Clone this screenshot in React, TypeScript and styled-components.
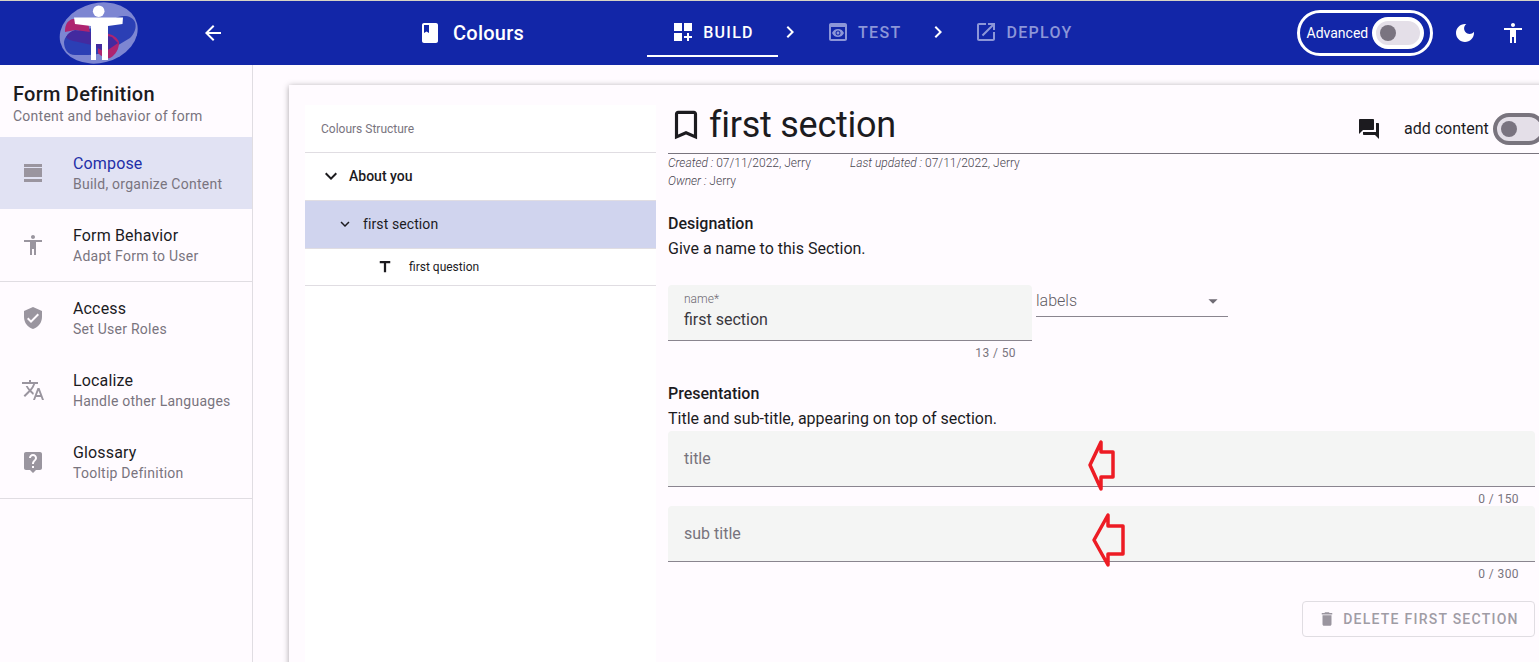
import React from "react";
import styled, { createGlobalStyle } from "styled-components";

const ink = "#1c1b1f";
const muted = "#79747e";
const blue = "#1226a8";

const paths = {
  back: "M20 11H7.83l5.59-5.59L12 4l-8 8 8 8 1.41-1.41L7.83 13H20v-2z",
  book: "M18 2H6c-1.1 0-2 .9-2 2v16c0 1.1.9 2 2 2h12c1.1 0 2-.9 2-2V4c0-1.1-.9-2-2-2zM6 4h5v8l-2.5-1.5L6 12V4z",
  build: "M3 3h8v8H3zm10 0h8v8h-8zM3 13h8v8H3zm15 0h-2v3h-3v2h3v3h2v-3h3v-2h-3z",
  test: "M19 3H5c-1.11 0-2 .9-2 2v14c0 1.1.89 2 2 2h14c1.1 0 2-.9 2-2V5c0-1.1-.89-2-2-2zm0 16H5V7h14v12zm-5.5-6c0 .83-.67 1.5-1.5 1.5s-1.5-.67-1.5-1.5.67-1.5 1.5-1.5 1.5.67 1.5 1.5zM12 9c-2.73 0-5.06 1.66-6 4 .94 2.34 3.27 4 6 4s5.06-1.66 6-4c-.94-2.34-3.27-4-6-4zm0 6.5c-1.38 0-2.5-1.12-2.5-2.5s1.12-2.5 2.5-2.5 2.5 1.12 2.5 2.5-1.12 2.5-2.5 2.5z",
  deploy: "M19 19H5V5h7V3H5c-1.11 0-2 .9-2 2v14c0 1.1.89 2 2 2h14c1.1 0 2-.9 2-2v-7h-2v7zM14 3v2h3.59l-9.83 9.83 1.41 1.41L19 6.41V10h2V3h-7z",
  chevron: "M10 6L8.59 7.41 13.17 12l-4.58 4.59L10 18l6-6z",
  moon: "M12 3c-4.97 0-9 4.03-9 9s4.03 9 9 9 9-4.03 9-9c0-.46-.04-.92-.1-1.36-.98 1.37-2.58 2.26-4.4 2.26-2.98 0-5.4-2.42-5.4-5.4 0-1.81.89-3.42 2.26-4.4-.44-.06-.9-.1-1.36-.1z",
  person: "M12 2c1.1 0 2 .9 2 2s-.9 2-2 2-2-.9-2-2 .9-2 2-2zm9 7h-6v13h-2v-6h-2v6H9V9H3V7h18v2z",
  compose: "M3 3h18v3H3zM3 7h18v9H3zM3 18h18v3H3z",
  shield: "M12 1L3 5v6c0 5.55 3.84 10.74 9 12 5.16-1.26 9-6.45 9-12V5l-9-4zm-2 16l-4-4 1.41-1.41L10 14.17l6.59-6.59L18 9l-8 8z",
  translate: "M12.87 15.07l-2.54-2.51.03-.03c1.74-1.94 2.98-4.17 3.71-6.53H17V4h-7V2H8v2H1v1.99h11.17C11.5 7.92 10.44 9.75 9 11.35 8.07 10.32 7.3 9.19 6.69 8h-2c.73 1.63 1.73 3.17 2.98 4.56l-5.09 5.02L4 19l5-5 3.11 3.11.76-2.04zM18.5 10h-2L12 22h2l1.12-3h4.75L21 22h2l-4.5-12zm-2.62 7l1.62-4.33L19.12 17h-3.24z",
  help: "M19 2H5c-1.11 0-2 .9-2 2v14c0 1.1.89 2 2 2h4l3 3 3-3h4c1.1 0 2-.9 2-2V4c0-1.1-.9-2-2-2zm-6 16h-2v-2h2v2zm2.07-7.75l-.9.92C13.45 11.9 13 12.5 13 14h-2v-.5c0-1.1.45-2.1 1.17-2.83l1.24-1.26c.37-.36.59-.86.59-1.41 0-1.1-.9-2-2-2s-2 .9-2 2H8c0-2.21 1.79-4 4-4s4 1.79 4 4c0 .88-.36 1.68-.93 2.25z",
  expand: "M16.59 8.59L12 13.17 7.41 8.59 6 10l6 6 6-6z",
  title: "M5 4v3h5.5v12h3V7H19V4z",
  bookmark: "M17 3H7c-1.1 0-1.99.9-1.99 2L5 21l7-3 7 3V5c0-1.1-.9-2-2-2zm0 15l-5-2.18L7 18V5h10v13z",
  forum: "M21 6h-2v9H6v2c0 .55.45 1 1 1h11l4 4V7c0-.55-.45-1-1-1zm-4 6V3c0-.55-.45-1-1-1H3c-.55 0-1 .45-1 1v14l4-4h10c.55 0 1-.45 1-1z",
  drop: "M7 10l5 5 5-5z",
  trash: "M6 19c0 1.1.9 2 2 2h8c1.1 0 2-.9 2-2V7H6v12zM19 4h-3.5l-1-1h-5l-1 1H5v2h14V4z",
};

const GlobalStyle = createGlobalStyle`
  html, body {
    margin: 0;
    height: 662px;
    overflow: hidden;
    background: #fffbff;
    font-family: Roboto, "Liberation Sans", sans-serif;
    color: ${ink};
  }
  * { box-sizing: border-box; }
`;

const Svg = styled.svg<{ $size: number; $color: string; $gap?: number }>`
  display: block;
  flex: none;
  width: ${(p) => p.$size}px;
  height: ${(p) => p.$size}px;
  fill: ${(p) => p.$color};
  margin-left: ${(p) => p.$gap ?? 0}px;
`;

function Icon({ d, size = 24, color = "currentColor", gap }: { d: string; size?: number; color?: string; gap?: number }) {
  return (
    <Svg viewBox="0 0 24 24" $size={size} $color={color} $gap={gap}>
      <path d={d} />
    </Svg>
  );
}

const Page = styled.div`
  width: 1539px;
  height: 662px;
  overflow: hidden;
  display: flex;
  flex-direction: column;
`;

const Header = styled.header`
  flex: none;
  height: 65px;
  border-top: 1px solid #d6d3c4;
  background: ${blue};
  color: #fff;
  display: flex;
  align-items: center;
  padding-left: 59px;
`;

const LogoSvg = styled.svg`
  display: block;
  flex: none;
  width: 80px;
  height: 64px;
`;

const BookTitle = styled.div`
  margin-left: 11px;
  width: 194px;
  font-size: 20px;
  font-weight: 500;
  line-height: 24px;
  letter-spacing: 0.25px;
`;

const Tab = styled.div<{ $active?: boolean; $gap?: number }>`
  align-self: flex-start;
  height: 56px;
  padding-top: 8px;
  margin-left: ${(p) => p.$gap ?? 0}px;
  display: flex;
  align-items: center;
  justify-content: center;
  gap: 8px;
  font-size: 16px;
  font-weight: 500;
  letter-spacing: 1.3px;
  color: ${(p) => (p.$active ? "#fff" : "#8c96d8")};
  border-bottom: 2px solid ${(p) => (p.$active ? "#fff" : "transparent")};
  width: ${(p) => (p.$active ? "131px" : "auto")};
`;

const Step = styled.div<{ $gap?: number }>`
  margin: -2px 0 0 ${(p) => p.$gap ?? 0}px;
`;

const AdvancedPill = styled.div`
  margin-left: 224px;
  width: 136px;
  height: 46px;
  border: 3px solid #fff;
  border-radius: 23px;
  display: flex;
  align-items: center;
  padding-left: 7px;
  gap: 4px;
  font-size: 14px;
`;

const Switch = styled.div<{ $ring: string }>`
  flex: none;
  width: 52px;
  height: 32px;
  border: 4px solid ${(p) => p.$ring};
  border-radius: 16px;
  background: #e4dfe8;
  display: flex;
  align-items: center;
  padding-left: 4px;
`;

const Thumb = styled.div`
  width: 16px;
  height: 16px;
  border-radius: 50%;
  background: #7a7480;
`;

const Body = styled.div`
  flex: 1;
  min-height: 0;
  display: flex;
`;

const Sidebar = styled.nav`
  flex: none;
  width: 253px;
  border-right: 1px solid #e0dde2;
`;

const SideHead = styled.div`
  height: 72px;
  padding: 17px 13px 0;
`;

const SideTitle = styled.div`
  font-size: 20px;
  font-weight: 500;
  line-height: 24px;
  letter-spacing: 0.25px;
`;

const SideSub = styled.div`
  font-size: 14px;
  line-height: 20px;
  letter-spacing: 0.25px;
  color: ${muted};
`;

const SideRow = styled.div<{ $active?: boolean; $divider?: boolean }>`
  height: ${(p) => (p.$divider ? "73px" : "72px")};
  padding: 16px 0 0 21px;
  display: flex;
  gap: 28px;
  background: ${(p) => (p.$active ? "#e1e2f3" : "transparent")};
  border-bottom: ${(p) => (p.$divider ? "1px solid #e0dde2" : "none")};
`;

const SideIcon = styled.div`
  padding-top: 8px;
  color: #9a959f;
`;

const RowTitle = styled.div<{ $active?: boolean }>`
  font-size: 16px;
  line-height: 21px;
  letter-spacing: 0.15px;
  color: ${(p) => (p.$active ? "#1f2fa8" : ink)};
`;

const Main = styled.main`
  flex: 1;
  min-width: 0;
  padding: 20px 0 0 36px;
`;

const Card = styled.div`
  width: 1300px;
  height: 640px;
  background: #fffbff;
  box-shadow: 0 1px 6px rgba(0, 0, 0, 0.35);
  padding: 20px 0 0 16px;
  display: flex;
  gap: 12px;
`;

const Tree = styled.div`
  flex: none;
  width: 351px;
  background: #fff;
`;

const TreeRow = styled.div<{ $h: number; $selected?: boolean; $indent: number; $lift?: boolean }>`
  height: ${(p) => p.$h}px;
  padding-left: ${(p) => p.$indent}px;
  padding-bottom: ${(p) => (p.$lift ? 2 : 0)}px;
  display: flex;
  align-items: center;
  border-bottom: 1px solid #e0dde2;
  background: ${(p) => (p.$selected ? "#d0d4ee" : "transparent")};
`;

const TreeCaption = styled.span`
  font-size: 12px;
  color: ${muted};
`;

const TreeLabel = styled.span<{ $bold?: boolean; $gap: number }>`
  font-size: 14px;
  font-weight: ${(p) => (p.$bold ? 500 : 400)};
  letter-spacing: ${(p) => (p.$bold ? 0 : 0.1)}px;
  margin-left: ${(p) => p.$gap}px;
`;

const QuestionLabel = styled.span`
  font-size: 12px;
  margin-left: 15px;
`;

const Detail = styled.div`
  flex: none;
  width: 867px;
`;

const TitleBar = styled.div`
  width: 900px;
  height: 49px;
  border-bottom: 1px solid ${muted};
  display: flex;
  align-items: center;
  padding-bottom: 9px;
`;

const BookmarkWrap = styled.div`
  margin-left: -1px;
`;

const BigTitle = styled.h1`
  margin: 0 0 0 4px;
  font-size: 36px;
  font-weight: 400;
  line-height: 40px;
  letter-spacing: -0.25px;
  flex: 1;
`;

const TitleEnd = styled.div`
  display: flex;
  align-items: center;
  width: 211px;
  margin-top: 8px;
`;

const AddLabel = styled.span`
  font-size: 16px;
  margin-left: 23px;
  margin-right: 4px;
`;

const Meta = styled.div`
  font-size: 12px;
  font-weight: 300;
  line-height: 18px;
  color: #49454f;
  display: flex;
`;

const MetaCell = styled.span`
  width: 182px;
`;

const MetaKey = styled.em`
  font-style: italic;
`;

const SectionTitle = styled.div<{ $top: number }>`
  margin-top: ${(p) => p.$top}px;
  font-size: 16px;
  font-weight: 500;
  line-height: 22px;
`;

const SectionText = styled.div`
  font-size: 16px;
  font-weight: 400;
  line-height: 24px;
  margin-top: 2px;
`;

const FieldRow = styled.div`
  display: flex;
  gap: 4px;
  margin-top: 24px;
`;

const Field = styled.div<{ $width: string }>`
  position: relative;
  width: ${(p) => p.$width};
  height: 56px;
  background: #f4f5f4;
  border-bottom: 1px solid #8a858f;
  border-radius: 4px 4px 0 0;
  padding: 0 16px;
  display: flex;
  flex-direction: column;
  justify-content: center;
`;

const FieldLabel = styled.div`
  font-size: 12px;
  line-height: 14px;
  font-weight: 300;
  color: #6d6972;
  margin: -2px 0 3px;
`;

const FieldValue = styled.div`
  font-size: 16px;
  line-height: 22px;
  color: #3a383e;
`;

const Placeholder = styled.div`
  font-size: 16px;
  color: #77737c;
`;

const Counter = styled.div`
  font-size: 12px;
  line-height: 16px;
  letter-spacing: 0.4px;
  color: #79747e;
  text-align: right;
  padding: 4px 16px 0 0;
  height: 19px;
`;

const NameColumn = styled.div`
  width: 364px;
`;

const SelectBox = styled.div`
  width: 192px;
  height: 32px;
  border-bottom: 1px solid #8a858f;
  display: flex;
  align-items: center;
  justify-content: space-between;
  padding-right: 4px;
  font-size: 16px;
  font-weight: 300;
  color: #5f5b64;
`;

const ArrowMark = styled.svg<{ $left: number; $top: number; $w: number; $h: number }>`
  position: absolute;
  left: ${(p) => p.$left}px;
  top: ${(p) => p.$top}px;
  width: ${(p) => p.$w}px;
  height: ${(p) => p.$h}px;
  overflow: visible;
  fill: none;
  stroke: #ed1c24;
  stroke-width: 3.5;
  stroke-linejoin: round;
`;

const ButtonRow = styled.div`
  display: flex;
  justify-content: flex-end;
  margin-top: 20px;
`;

const DeleteButton = styled.button`
  width: 233px;
  height: 36px;
  background: transparent;
  border: 1px solid #e0dde2;
  border-radius: 4px;
  display: flex;
  align-items: center;
  justify-content: center;
  gap: 7px;
  font-family: inherit;
  font-size: 14px;
  font-weight: 500;
  letter-spacing: 1.25px;
  color: #a09ca5;
  padding: 0;
`;

const items = [
  { icon: paths.compose, title: "Compose", sub: "Build, organize Content", active: true },
  { icon: paths.person, title: "Form Behavior", sub: "Adapt Form to User", divider: true },
  { icon: paths.shield, title: "Access", sub: "Set User Roles" },
  { icon: paths.translate, title: "Localize", sub: "Handle other Languages" },
  { icon: paths.help, title: "Glossary", sub: "Tooltip Definition", divider: true },
];

function Logo() {
  return (
    <LogoSvg viewBox="0 0 80 64">
      <ellipse cx="39.7" cy="32" rx="39.5" ry="30" transform="rotate(-14 39.7 32)" fill="#7d86d2" />
      <path d="M5 41C6 36 8 34 12 33L33 27 59 16C66 14 73 15 76 21 78 27 75 33 71 37L51 49C44 52 36 54 29 54L16 54C9 54 5 48 5 41Z" fill="#2b3fb5" />
      <path d="M6 31C6 26 7 22 10 20 13 17 20 17 29 21L31 32 16 29Z" fill="#ae2470" />
      <path d="M38 29L53 34C57 36 60 39 60 42 60 47 57 54 51 57 46 58 42 55 39 52Z" fill="#ae2470" />
      <path d="M7 36C9 32 12 30 16 29L31 31 53 36 59 42 46 51 33 44 19 41C14 40 9 39 7 36Z" fill="#432a9f" />
      <circle cx="39.7" cy="10.2" r="5.8" fill="#fff" />
      <path d="M15 16.5L64 16.5 63.5 23 49 25V59H43V43H37V59H32V25L16 23Z" fill="#fff" />
    </LogoSvg>
  );
}

export default function App() {
  return (
    <Page>
      <GlobalStyle />
      <Header>
        <Logo />
        <Icon d={paths.back} gap={62} />
        <Icon d={paths.book} gap={193} />
        <BookTitle>Colours</BookTitle>
        <Tab $active>
          <Icon d={paths.build} />
          BUILD
        </Tab>
        <Step><Icon d={paths.chevron} /></Step>
        <Tab $gap={24}>
          <Icon d={paths.test} color="#8c96d8" />
          TEST
        </Tab>
        <Step $gap={25}><Icon d={paths.chevron} /></Step>
        <Tab $gap={24}>
          <Icon d={paths.deploy} color="#8c96d8" />
          DEPLOY
        </Tab>
        <AdvancedPill>
          Advanced
          <Switch $ring="#fff"><Thumb /></Switch>
        </AdvancedPill>
        <Icon d={paths.moon} gap={20} />
        <Icon d={paths.person} gap={24} />
      </Header>
      <Body>
        <Sidebar>
          <SideHead>
            <SideTitle>Form Definition</SideTitle>
            <SideSub>Content and behavior of form</SideSub>
          </SideHead>
          {items.map((item) => (
            <SideRow key={item.title} $active={item.active} $divider={item.divider}>
              <SideIcon><Icon d={item.icon} /></SideIcon>
              <div>
                <RowTitle $active={item.active}>{item.title}</RowTitle>
                <SideSub>{item.sub}</SideSub>
              </div>
            </SideRow>
          ))}
        </Sidebar>
        <Main>
          <Card>
            <Tree>
              <TreeRow $h={48} $indent={16}>
                <TreeCaption>Colours Structure</TreeCaption>
              </TreeRow>
              <TreeRow $h={48} $indent={14} $lift>
                <Icon d={paths.expand} />
                <TreeLabel $bold $gap={6}>About you</TreeLabel>
              </TreeRow>
              <TreeRow $h={48} $indent={31} $selected $lift>
                <Icon d={paths.expand} size={18} />
                <TreeLabel $gap={9}>first section</TreeLabel>
              </TreeRow>
              <TreeRow $h={37} $indent={71}>
                <Icon d={paths.title} size={18} />
                <QuestionLabel>first question</QuestionLabel>
              </TreeRow>
            </Tree>
            <Detail>
              <TitleBar>
                <BookmarkWrap><Icon d={paths.bookmark} size={38} /></BookmarkWrap>
                <BigTitle>first section</BigTitle>
                <TitleEnd>
                  <Icon d={paths.forum} />
                  <AddLabel>add content</AddLabel>
                  <Switch $ring="#79747e"><Thumb /></Switch>
                </TitleEnd>
              </TitleBar>
              <Meta>
                <MetaCell><MetaKey>Created :</MetaKey> 07/11/2022, Jerry</MetaCell>
                <span><MetaKey>Last updated :</MetaKey> 07/11/2022, Jerry</span>
              </Meta>
              <Meta><span><MetaKey>Owner :</MetaKey> Jerry</span></Meta>
              <SectionTitle $top={23}>Designation</SectionTitle>
              <SectionText>Give a name to this Section.</SectionText>
              <FieldRow>
                <NameColumn>
                  <Field $width="364px">
                    <FieldLabel>name*</FieldLabel>
                    <FieldValue>first section</FieldValue>
                  </Field>
                  <Counter>13 / 50</Counter>
                </NameColumn>
                <SelectBox>
                  labels
                  <Icon d={paths.drop} color="#6f6b74" size={22} />
                </SelectBox>
              </FieldRow>
              <SectionTitle $top={23}>Presentation</SectionTitle>
              <SectionText>Title and sub-title, appearing on top of section.</SectionText>
              <Field $width="867px">
                <Placeholder>title</Placeholder>
                <ArrowMark $left={420} $top={9} $w={26} $h={50} viewBox="0 0 26 50">
                  <path d="M2 25L13 2V12H25V37H13V49Z" />
                </ArrowMark>
              </Field>
              <Counter>0 / 150</Counter>
              <Field $width="867px">
                <Placeholder>sub title</Placeholder>
                <ArrowMark $left={424} $top={7} $w={32} $h={54} viewBox="0 0 32 54">
                  <path d="M2 27L16 2V13H31V41H16V52Z" />
                </ArrowMark>
              </Field>
              <Counter>0 / 300</Counter>
              <ButtonRow>
                <DeleteButton>
                  <Icon d={paths.trash} size={18} color="#9a959f" />
                  DELETE FIRST SECTION
                </DeleteButton>
              </ButtonRow>
            </Detail>
          </Card>
        </Main>
      </Body>
    </Page>
  );
}
